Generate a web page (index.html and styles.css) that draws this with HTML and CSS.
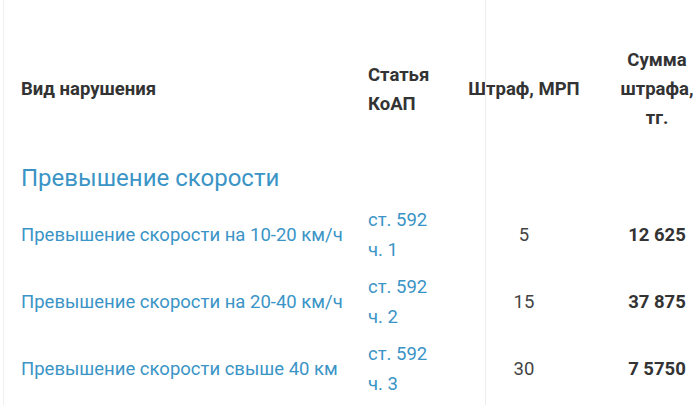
FILE: index.html
```html
<!DOCTYPE html>
<html lang="ru">
<head>
<meta charset="utf-8">
<link rel="stylesheet" href="styles.css">
</head>
<body>
<div class="page">
  <div class="divider"></div>
  <div class="table">
    <div class="row head">
      <div class="c1">Вид нарушения</div>
      <div class="c2">Статья<br>КоАП</div>
      <div class="c3">Штраф, МРП</div>
      <div class="c4">Сумма<br>штрафа,<br>тг.</div>
    </div>
    <div class="section">Превышение скорости</div>
    <div class="row">
      <div class="c1 link">Превышение скорости на 10-20 км/ч</div>
      <div class="c2 link">ст. 592<br>ч. 1</div>
      <div class="c3">5</div>
      <div class="c4 sum">12 625</div>
    </div>
    <div class="row">
      <div class="c1 link">Превышение скорости на 20-40 км/ч</div>
      <div class="c2 link">ст. 592<br>ч. 2</div>
      <div class="c3">15</div>
      <div class="c4 sum">37 875</div>
    </div>
    <div class="row">
      <div class="c1 link">Превышение скорости свыше 40 км</div>
      <div class="c2 link">ст. 592<br>ч. 3</div>
      <div class="c3">30</div>
      <div class="c4 sum">7 5750</div>
    </div>
  </div>
</div>
</body>
</html>
```
FILE: styles.css
```css
html, body {
  margin: 0;
  padding: 0;
  background: #ffffff;
}
body {
  font-family: Roboto, "Noto Sans", sans-serif;
  color: #333333;
  width: 700px;
  height: 405px;
  overflow: hidden;
}
.page {
  position: relative;
  margin-left: 3px;
  border-left: 1px solid #f0f0f0;
  height: 405px;
  padding-left: 17px;
  box-sizing: border-box;
}
.divider {
  position: absolute;
  left: 481px;
  top: 0;
  bottom: 0;
  width: 1px;
  background: #ececec;
}
.table {
  padding-top: 46px;
}
.row {
  display: grid;
  grid-template-columns: 347px 100px 112px 120px;
  align-items: center;
  font-size: 18.5px;
  line-height: 30px;
  padding: 4px 0 3px;
}
.row.head {
  font-size: 18.5px;
  font-weight: 700;
  line-height: 29px;
  padding: 0;
}
.c3 { text-align: center; color: #444444; white-space: nowrap; }
.head .c3 { color: #333333; }
.c4 {
  text-align: center;
  padding-left: 34px;
  white-space: nowrap;
}
.link { color: #3a94c6; }
.sum { font-weight: 700; }
.section {
  font-size: 24px;
  color: #3a94c6;
  padding: 31px 0 9px;
  line-height: 28px;
}
```
